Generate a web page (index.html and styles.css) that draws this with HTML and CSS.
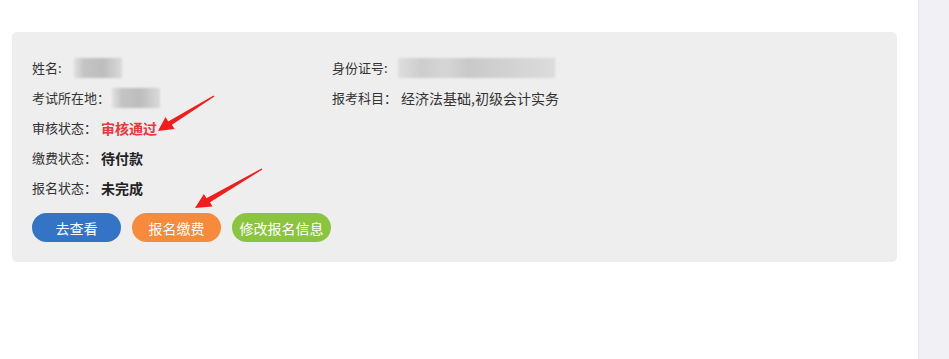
FILE: index.html
```html
<!DOCTYPE html>
<html lang="zh-CN">
<head>
    <meta charset="UTF-8">
    <title>报名信息</title>
    <link rel="stylesheet" href="styles.css">
</head>
<body>
    <div class="page">
        <div class="main">
            <div class="card">
                <div class="info">
                    <div class="cell">姓名:<span class="blur blur-name"></span></div>
                    <div class="cell">身份证号:<span class="blur blur-id"></span></div>
                    <div class="cell">考试所在地：<span class="blur blur-place"></span></div>
                    <div class="cell">报考科目：<span class="val">经济法基础,初级会计实务</span></div>
                    <div class="cell wide">审核状态：<b class="val pass">审核通过</b></div>
                    <div class="cell wide">缴费状态：<b class="val">待付款</b></div>
                    <div class="cell wide">报名状态：<b class="val">未完成</b></div>
                </div>
                <div class="actions">
                    <button class="btn btn-blue">去查看</button>
                    <button class="btn btn-orange">报名缴费</button>
                    <button class="btn btn-green">修改报名信息</button>
                </div>
                <svg class="marks" width="885" height="230" viewBox="0 0 885 230">
                    <polygon fill="#f21c1c" points="146,99 162.6,97.1 159.9,92.8 202.4,64.4 201.6,63.6 156.2,89.4 153.5,85.1"/>
                    <polygon fill="#f21c1c" points="183,176 200.5,174.6 198,170.3 250.4,137.5 249.6,136.5 194.4,166.2 191.9,161.9"/>
                </svg>
            </div>
        </div>
        <div class="side"></div>
    </div>
</body>
</html>
```

FILE: styles.css
```css
body { margin: 0; font-family: "Noto Sans CJK SC", "Noto Sans", sans-serif; font-size: 13px; color: #333; background: #fff; }
.page { display: flex; height: 359px; }
.main { flex: 1; padding: 32px 21px 0 12px; }
.side { width: 30px; background: #f1f1f5; border-left: 1px solid #e6e6ef; }
.card { position: relative; background: #eeeeee; border-radius: 5px; padding: 21px 20px 21px 20px; height: 188px; }
.info { display: grid; grid-template-columns: 300px 1fr; }
.cell { height: 30px; line-height: 30px; display: flex; align-items: center; white-space: nowrap; }
.cell.wide { grid-column: 1 / 3; }
.val { font-size: 14px; margin-left: 4px; }
.cell b { font-weight: bold; color: #222; }
.cell b.pass { color: #e9383c; }
.blur { display: inline-block; height: 20px; background: linear-gradient(90deg, #e2e2e2, #c4c4c4 20%, #bdbdbd 60%, #dadada); filter: blur(1px); }
.blur-name { width: 48px; margin-left: 12px; }
.blur-place { width: 48px; margin-left: 2px; }
.blur-id { width: 157px; margin-left: 10px; background: linear-gradient(90deg, #dedede, #cdcdcd 15%, #d6d6d6 30%, #c9c9c9 45%, #d2d2d2 70%, #dcdcdc); }
.actions { display: flex; gap: 11px; margin-top: 10px; }
.btn { height: 29px; min-width: 89px; padding: 0 7px; border: none; border-radius: 15px; color: #fff; font-family: inherit; font-size: 14px; cursor: pointer; }
.btn-blue { background: #3474c6; }
.btn-orange { background: #f68b3c; }
.btn-green { background: #8bc53f; min-width: 99px; }
.marks { position: absolute; left: 0; top: 0; pointer-events: none; }
```
